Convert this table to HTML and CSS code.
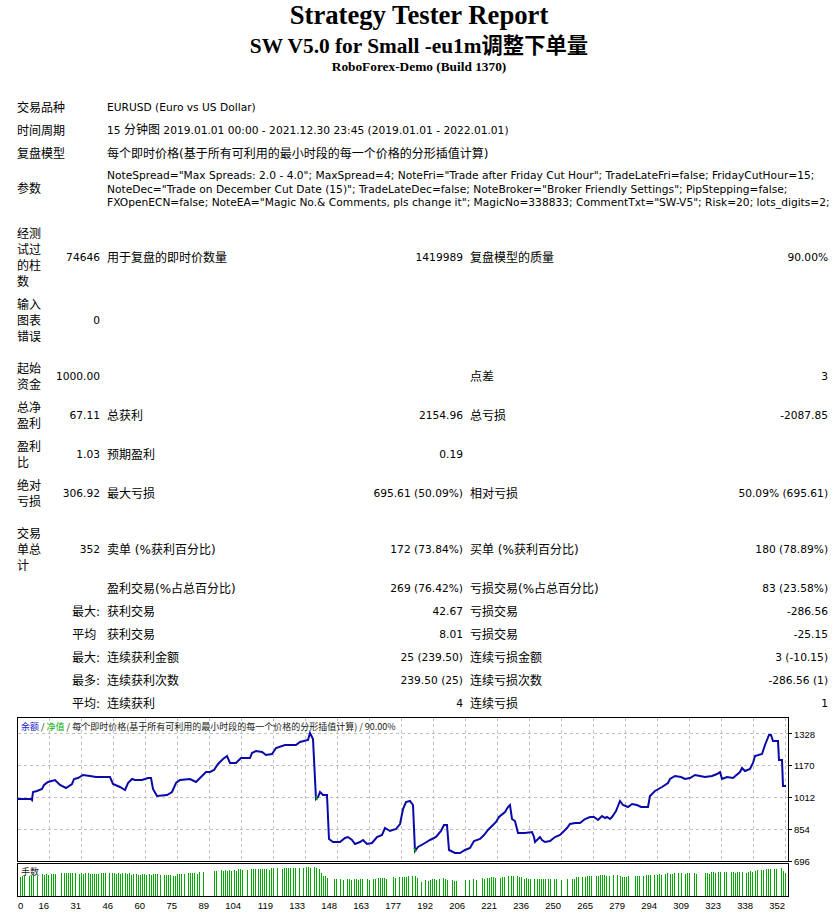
FILE: index.html
```html
<!DOCTYPE html>
<html>
<head>
<meta charset="utf-8">
<title>Strategy Tester: SW V5.0 for Small -eu1m调整下单量</title>
<link rel="stylesheet" href="styles.css">
</head>
<body>
<div class="header">
  <div class="title">Strategy Tester Report</div>
  <div class="subtitle">SW V5.0 for Small -eu1m调整下单量</div>
  <div class="server">RoboForex-Demo (Build 1370)</div>
</div>
<table class="report">
  <colgroup>
    <col class="c1"><col class="c2"><col class="c3"><col class="c4"><col class="c5"><col class="c6">
  </colgroup>
  <tr><td colspan="2" class="zh">交易品种</td><td colspan="4">EURUSD (Euro vs US Dollar)</td></tr>
  <tr><td colspan="2" class="zh">时间周期</td><td colspan="4">15 <span class="zs">分钟图</span> 2019.01.01 00:00 - 2021.12.30 23:45 (2019.01.01 - 2022.01.01)</td></tr>
  <tr><td colspan="2" class="zh">复盘模型</td><td colspan="4" class="zh">每个即时价格(基于所有可利用的最小时段的每一个价格的分形插值计算)</td></tr>
  <tr><td colspan="2" class="zh">参数</td><td colspan="4" class="params">NoteSpread="Max Spreads: 2.0 - 4.0"; MaxSpread=4; NoteFri="Trade after Friday Cut Hour"; TradeLateFri=false; FridayCutHour=15;<br>NoteDec="Trade on December Cut Date (15)"; TradeLateDec=false; NoteBroker="Broker Friendly Settings"; PipStepping=false;<br>FXOpenECN=false; NoteEA="Magic No.&amp; Comments, pls change it"; MagicNo=338833; CommentTxt="SW-V5"; Risk=20; lots_digits=2;</td></tr>
  <tr class="spacer"><td colspan="6"></td></tr>
  <tr><td class="zh">经测试过的柱数</td><td class="r">74646</td><td class="zh">用于复盘的即时价数量</td><td class="r">1419989</td><td class="zh">复盘模型的质量</td><td class="r">90.00%</td></tr>
  <tr><td class="zh">输入图表错误</td><td class="r">0</td><td></td><td class="r"></td><td></td><td class="r"></td></tr>
  <tr class="spacer"><td colspan="6"></td></tr>
  <tr><td class="zh">起始资金</td><td class="r">1000.00</td><td></td><td></td><td class="zh">点差</td><td class="r">3</td></tr>
  <tr><td class="zh">总净盈利</td><td class="r">67.11</td><td class="zh">总获利</td><td class="r">2154.96</td><td class="zh">总亏损</td><td class="r">-2087.85</td></tr>
  <tr><td class="zh">盈利比</td><td class="r">1.03</td><td class="zh">预期盈利</td><td class="r">0.19</td><td></td><td class="r"></td></tr>
  <tr><td class="zh">绝对亏损</td><td class="r">306.92</td><td class="zh">最大亏损</td><td class="r">695.61 (50.09%)</td><td class="zh">相对亏损</td><td class="r">50.09% (695.61)</td></tr>
  <tr class="spacer"><td colspan="6"></td></tr>
  <tr><td class="zh">交易单总计</td><td class="r">352</td><td class="zh">卖单 (%获利百分比)</td><td class="r">172 (73.84%)</td><td class="zh">买单 (%获利百分比)</td><td class="r">180 (78.89%)</td></tr>
  <tr><td colspan="2" class="r"></td><td class="zh">盈利交易(%占总百分比)</td><td class="r">269 (76.42%)</td><td class="zh">亏损交易(%占总百分比)</td><td class="r">83 (23.58%)</td></tr>
  <tr><td colspan="2" class="r zh">最大:</td><td class="zh">获利交易</td><td class="r">42.67</td><td class="zh">亏损交易</td><td class="r">-286.56</td></tr>
  <tr><td colspan="2" class="r zh">平均&nbsp;</td><td class="zh">获利交易</td><td class="r">8.01</td><td class="zh">亏损交易</td><td class="r">-25.15</td></tr>
  <tr><td colspan="2" class="r zh">最大:</td><td class="zh">连续获利金额</td><td class="r">25 (239.50)</td><td class="zh">连续亏损金额</td><td class="r">3 (-10.15)</td></tr>
  <tr><td colspan="2" class="r zh">最多:</td><td class="zh">连续获利次数</td><td class="r">239.50 (25)</td><td class="zh">连续亏损次数</td><td class="r">-286.56 (1)</td></tr>
  <tr><td colspan="2" class="r zh">平均:</td><td class="zh">连续获利</td><td class="r">4</td><td class="zh">连续亏损</td><td class="r">1</td></tr>
</table>
<svg class="chart" width="838" height="202" viewBox="0 717 838 202" xmlns="http://www.w3.org/2000/svg">
  <rect class="bg" x="0" y="717" width="838" height="202"/>
  <path class="grid" d="M18 734.5H788M18 766.5H788M18 798.5H788M18 830.5H788
    M49.5 719V862M81.5 719V862M113.5 719V862M145.5 719V862M177.5 719V862M209.5 719V862M241.5 719V862M273.5 719V862
    M305.5 719V862M337.5 719V862M369.5 719V862M401.5 719V862M433.5 719V862M465.5 719V862M497.5 719V862M529.5 719V862
    M561.5 719V862M593.5 719V862M625.5 719V862M657.5 719V862M689.5 719V862M721.5 719V862M753.5 719V862M785.5 719V862"/>
  <rect class="frame" x="17.5" y="718.5" width="771" height="144"/>
  <rect class="frame" x="17.5" y="864.5" width="771" height="33"/>
  <path class="ticks" d="M788 734.5H792M788 766.5H792M788 798.5H792M788 830.5H792M788 862.5H792"/>
  <text class="legend" x="21" y="730.5"><tspan class="lg-blue">余额</tspan> / <tspan class="lg-green">净值</tspan> / 每个即时价格(基于所有可利用的最小时段的每一个价格的分形插值计算) / 90.00%</text>
  <text class="legend" x="21" y="875.5">手数</text>
  <path id="vol" class="vol" d=""/>
  <polyline class="balance" points="17,800 31,800 32,801 33,793 37,792 42,790 44,786 48,783 55,781 60,786 66,789 72,785 74,780 78,779 83,776 90,777 96,778 110,778 113,785 120,788 125,791 128,784 132,780 135,781 142,781 148,779 151,779 153,790 157,797 167,796 172,793 176,784 180,781 190,780 196,783 200,779 206,773 210,773 214,771 218,765 223,760 227,757 230,764 236,764 241,759 250,759 252,754 256,752 262,753 266,756 272,755 276,749 285,746 290,746 296,746 300,743 308,741 310,734 313,740 316,800 318,798 320,793 323,796 327,796 329,840 333,843 340,843 345,839 348,838 352,841 355,845 360,843 363,841 367,845 372,844 377,838 382,836 385,829 390,832 396,830 400,825 403,810 406,803 410,802 413,806 415,852 418,848 425,844 430,841 436,838 441,832 444,826 447,826 449,851 455,854 460,854 465,851 470,849 474,842 480,840 484,836 488,831 492,827 496,823 499,818 505,813 508,808 510,806 512,820 515,822 518,834 525,834 532,833 534,838 535,843 540,838 542,841 545,843 550,842 555,838 560,836 563,833 567,829 570,825 575,824 580,824 585,820 590,818 594,818 598,821 602,817 605,819 607,818 610,820 612,818 616,812 620,802 623,806 628,808 632,805 637,806 641,808 648,808 650,797 655,792 662,788 668,784 670,780 675,777 681,778 685,780 690,779 695,776 700,777 705,778 712,777 717,775 720,773 722,780 727,778 733,779 740,773 742,769 745,772 750,770 753,764 755,757 762,755 765,746 769,736 771,736 773,742 778,742 779,761 782,761 783,787 786,787"/>
  <path class="equity" d="M316 797L317 801M414 849L416 853"/>
  <g class="axis">
    <text x="794" y="738.5">1328</text>
    <text x="794" y="770">1170</text>
    <text x="794" y="801.5">1012</text>
    <text x="794" y="834">854</text>
    <text x="794" y="865.5">696</text>
  </g>
  <g class="axis xaxis">
    <text x="18" y="909.5" class="start">0</text>
    <text x="49" y="909.5">16</text>
    <text x="81" y="909.5">31</text>
    <text x="113" y="909.5">46</text>
    <text x="145" y="909.5">60</text>
    <text x="177" y="909.5">75</text>
    <text x="209" y="909.5">89</text>
    <text x="241" y="909.5">104</text>
    <text x="273" y="909.5">119</text>
    <text x="305" y="909.5">133</text>
    <text x="337" y="909.5">148</text>
    <text x="369" y="909.5">163</text>
    <text x="401" y="909.5">177</text>
    <text x="433" y="909.5">192</text>
    <text x="465" y="909.5">206</text>
    <text x="497" y="909.5">221</text>
    <text x="529" y="909.5">236</text>
    <text x="561" y="909.5">250</text>
    <text x="593" y="909.5">265</text>
    <text x="625" y="909.5">279</text>
    <text x="657" y="909.5">294</text>
    <text x="689" y="909.5">309</text>
    <text x="721" y="909.5">323</text>
    <text x="753" y="909.5">338</text>
    <text x="785" y="909.5">352</text>
  </g>
</svg>
<script src="script.js"></script>
</body>
</html>
```

FILE: styles.css
```css
* { box-sizing: border-box; }
html, body { margin: 0; padding: 0; background: #fff; color: #000; }

.header {
  display: flex;
  flex-direction: column;
  align-items: center;
  font-family: "Liberation Serif", "Noto Sans CJK SC", serif;
  font-weight: bold;
  width: 838px;
}
.title { font-size: 26.67px; line-height: 31px; height: 31px; }
.subtitle { font-size: 21.33px; line-height: 30px; height: 30px; }
.server { font-size: 13.33px; line-height: 12px; height: 12px; }

.report {
  margin: 23px 0 0 13px;
  width: 819px;
  border-spacing: 1px;
  table-layout: fixed;
  font-family: "DejaVu Sans", "Noto Sans CJK SC", sans-serif;
  font-size: 10.67px;
  line-height: 16px;
}
.c1 { width: 36px; }
.c2 { width: 52px; }
.c3 { width: 196px; }
.c4 { width: 165px; }
.c5 { width: 182px; }
.c6 { width: 181px; }
.report td { padding: 3px; height: 22px; text-align: left; vertical-align: middle; }
.report td.r { text-align: right; }
.report td.zh { font-size: 12px; line-height: 16px; }
.report .zs { font-size: 12px; line-height: 14px; }
.report td.params { line-height: 13.5px; white-space: nowrap; }
.report .spacer td { height: 8px; padding: 0; font-size: 0; line-height: 0; }

.chart { display: block; }
.chart .bg { fill: #fff; }
.chart .grid { stroke: #c0c0c0; stroke-width: 1; stroke-dasharray: 3 3; fill: none; }
.chart .frame { fill: none; stroke: #000; stroke-width: 1; }
.chart .ticks { stroke: #000; stroke-width: 1; }
.chart .legend { font-family: "Noto Sans CJK SC", sans-serif; font-size: 9px; fill: #202020; }
.chart .lg-blue { fill: #1a1acc; }
.chart .lg-green { fill: #00b000; }
.chart .vol { stroke: #00a800; stroke-width: 1; fill: none; }
.chart .balance { fill: none; stroke: #0a0aa8; stroke-width: 2; stroke-linejoin: miter; }
.chart .equity { stroke: #00b000; stroke-width: 1.5; fill: none; }
.chart .axis text { font-family: "Liberation Sans", sans-serif; font-size: 9.5px; fill: #000; }
.chart .xaxis text { text-anchor: end; }
.chart .xaxis text.start { text-anchor: start; }
```

FILE: script.js
```js
(function () {
  var pts = [[17,878],[45,875],[75,874],[110,874],[150,875],[170,876],[190,874],[205,873],[225,871],[250,870],[290,869],[310,868],[318,868],[322,876],[335,880],[370,880],[400,878],[415,877],[420,882],[440,879],[460,882],[490,878],[515,877],[530,880],[560,880],[600,876],[640,877],[670,874],[700,874],[720,873],[745,873],[760,871],[782,869],[786,875]];
  function topAt(x) {
    for (var i = 1; i < pts.length; i++) {
      if (x <= pts[i][0]) {
        var a = pts[i - 1], b = pts[i];
        return a[1] + (b[1] - a[1]) * (x - a[0]) / (b[0] - a[0]);
      }
    }
    return pts[pts.length - 1][1];
  }
  var seed = 12345;
  function rnd() {
    seed = (seed * 1103515245 + 12345) % 2147483648;
    return seed / 2147483648;
  }
  var d = "";
  for (var i = 0; i <= 352; i++) {
    var x = Math.round(20 + i * 2.18);
    if (x > 786) break;
    var r = rnd();
    if (r < 0.22) continue;
    var t = Math.round(topAt(x) + (rnd() < 0.3 ? 1 : 0));
    d += "M" + (x + 0.5) + " " + t + "V897";
  }
  document.getElementById("vol").setAttribute("d", d);
})();
```
